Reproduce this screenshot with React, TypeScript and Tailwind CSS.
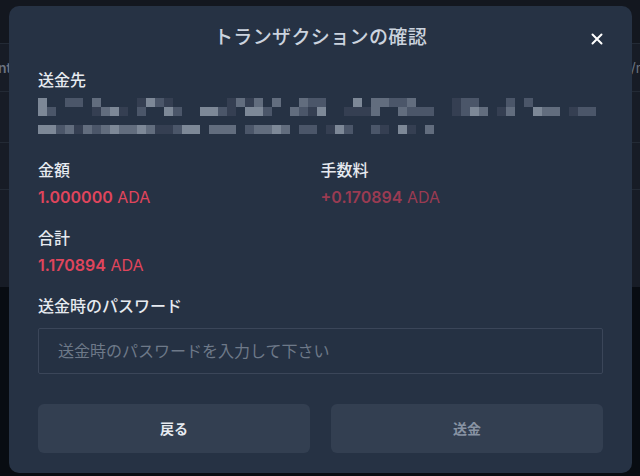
import React from "react";

const ROWS = [
  "4..22.3" + "...." + "1421" + "......" + "1313" + "." + "3" + ".." + "322" + "..." + "4" + "." + "33223" + "...." + "122" + "..." + "2" + "." + "2" + ".......",
  "42" + "...." + "1341" + "." + "2" + ".." + "42" + ".." + "4421" + "." + "442" + ".." + "3214" + ".." + "1113" + ".." + "3222" + ".." + "1243" + "." + "13" + ".." + "433" + "." + "122",
  "",
  "442313234334311244" + "." + "333" + "." + "23343" + "." + "22" + "." + "142" + ".." + "21" + "." + "41" + "." + "3",
];

const SHADES: Record<string, string> = {
  "1": "#353f52",
  "2": "#4b5669",
  "3": "#626d7e",
  "4": "#7d8897",
};

function Mosaic() {
  const rects: React.ReactNode[] = [];
  ROWS.forEach((row, r) => {
    row.split("").forEach((c, i) => {
      if (c !== ".") {
        rects.push(
          <rect key={`${r}-${i}`} x={i * 9} y={r * 9} width={9} height={9} fill={SHADES[c]} />
        );
      }
    });
  });
  return (
    <svg width={558} height={36} viewBox="0 0 558 36" shapeRendering="crispEdges">
      {rects}
    </svg>
  );
}

const font = { fontFamily: '"Inter", "Noto Sans CJK JP", sans-serif' };

export default function App() {
  return (
    <div className="relative h-[476px] w-[640px] overflow-hidden bg-[#080c12]" style={font}>
      {/* background page (dimmed) */}
      <div className="flex flex-col">
        <div className="h-[44px] border-b border-[#232a35] bg-[#13171f]" />
        <div className="flex h-[48px] items-center justify-between border-b border-[#232a35] bg-[#171c26] text-[14px] font-semibold text-[#6b7380]">
          <span className="-ml-[2px]">nt!</span>
          <span className="mr-[-4px] font-normal">/n</span>
        </div>
        <div className="h-[51px] border-b border-[#232a35] bg-[#171c26]" />
        <div className="h-[47px] border-b border-[#232a35] bg-[#171c26]" />
        <div className="h-[97px] bg-[#171c26]" />
      </div>

      {/* modal */}
      <div className="absolute left-[9px] top-[6px] flex h-[467px] w-[623px] flex-col rounded-[10px] bg-[#263244] px-[29px] pt-[18px]">
        <div className="relative flex h-[28px] items-center justify-center">
          <span className="text-[19px] font-medium leading-[28px] tracking-[0.02em] text-[#cbd3de]">
            トランザクションの確認
          </span>
          <svg
            className="absolute right-[0px] top-[9px]"
            width="12"
            height="12"
            viewBox="0 0 12 12"
          >
            <path d="M1.5 1.5 L10.5 10.5 M10.5 1.5 L1.5 10.5" stroke="#ffffff" strokeWidth="2" strokeLinecap="round" />
          </svg>
        </div>

        <div className="mt-4 text-[16px] font-medium leading-[24px] text-[#e6eaf0]">送金先</div>
        <div className="mt-[6px] h-[36px]">
          <Mosaic />
        </div>

        <div className="mt-[24px] grid grid-cols-2">
          <div>
            <div className="text-[16px] font-medium leading-[24px] text-[#e6eaf0]">金額</div>
            <div className="mt-[4px] text-[16px] leading-[22px] text-[#e0455c]">
              <span className="font-semibold">1.000000</span> <span>ADA</span>
            </div>
          </div>
          <div>
            <div className="text-[16px] font-medium leading-[24px] text-[#e6eaf0]">手数料</div>
            <div className="mt-[4px] text-[16px] leading-[22px] text-[#9a3b52]">
              <span className="font-semibold">+0.170894</span> <span>ADA</span>
            </div>
          </div>
        </div>

        <div className="mt-[18px]">
          <div className="text-[16px] font-medium leading-[24px] text-[#e6eaf0]">合計</div>
          <div className="mt-[4px] text-[16px] leading-[22px] text-[#e0455c]">
            <span className="font-semibold">1.170894</span> <span>ADA</span>
          </div>
        </div>

        <div className="mt-[18px] text-[16px] font-medium leading-[24px] text-[#e6eaf0]">送金時のパスワード</div>
        <div className="mt-[10px] flex h-[46px] items-center rounded-[2px] border border-[#3b4659] bg-[#253143] px-[19px] text-[16px] text-[#6e7989]">
          送金時のパスワードを入力して下さい
        </div>

        <div className="mt-[30px] grid grid-cols-2 gap-[21px]">
          <div className="flex h-[49px] items-center justify-center rounded-[6px] bg-[#333f51] text-[14px] font-semibold text-[#e6eaf0]">
            戻る
          </div>
          <div className="flex h-[49px] items-center justify-center rounded-[6px] bg-[#333f51] text-[14px] font-semibold text-[#8893a3]">
            送金
          </div>
        </div>
      </div>
    </div>
  );
}
